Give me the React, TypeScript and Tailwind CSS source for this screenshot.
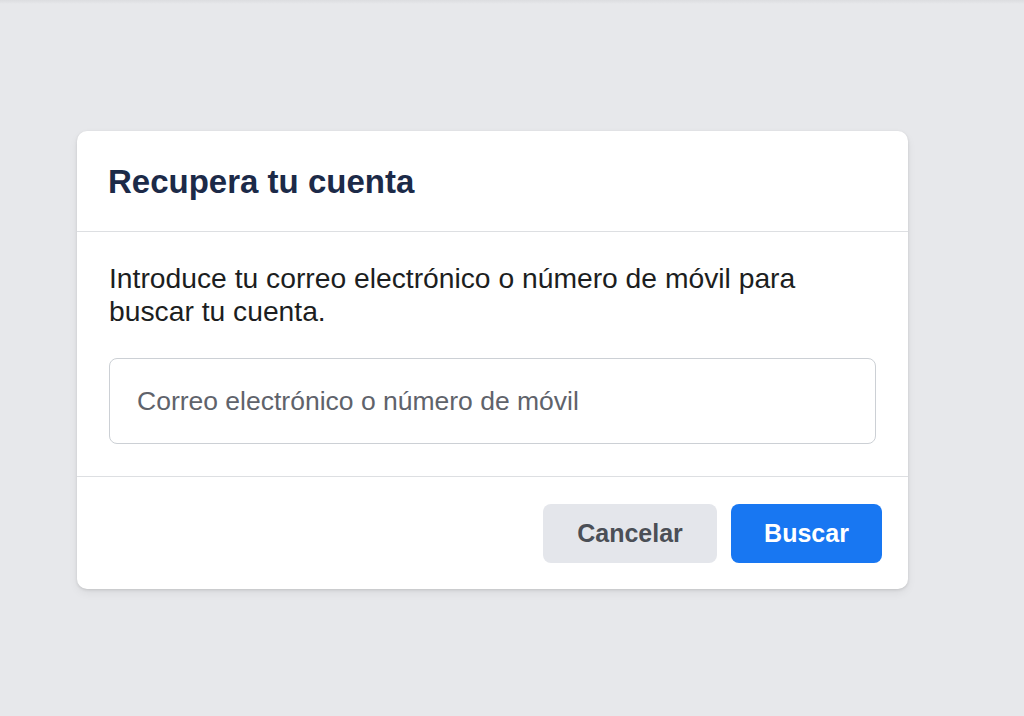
import { useState } from 'react';

const font = { fontFamily: '"Liberation Sans", Arial, Helvetica, sans-serif' };

const RecoverCard = () => {
	const [value, setValue] = useState('');

	return (
		<div className="w-[831px] rounded-[10px] bg-white shadow-[0_1px_3px_rgba(0,0,0,0.12),0_4px_10px_rgba(0,0,0,0.06)]">
			<div className="flex h-[101px] items-center border-b border-[#dddfe2] px-[31px]">
				<h2 className="text-[33px] font-bold leading-none text-[#1c2a48]">
					Recupera tu cuenta
				</h2>
			</div>

			<div className="border-b border-[#dddfe2] px-[32px] pb-[32px] pt-[30px]">
				<p className="text-[28.25px] leading-[33px] text-[#1c1e21]">
					Introduce tu correo electrónico o número de móvil para buscar tu cuenta.
				</p>
				<input
					type="text"
					value={value}
					onChange={(e) => setValue(e.target.value)}
					placeholder="Correo electrónico o número de móvil"
					className="mt-[30px] h-[86px] w-full rounded-[8px] border-[1.5px] border-[#ccd0d5] bg-white px-[27px] text-[26.5px] text-[#1c1e21] outline-none placeholder:text-[#5f636b]"
					style={font}
				/>
			</div>

			<div className="flex items-center justify-end gap-[14px] pb-[26px] pl-[32px] pr-[26px] pt-[27px]">
				<button className="h-[59px] w-[174px] rounded-[8px] bg-[#e4e6eb] text-[25px] font-bold text-[#4b4f56]" style={font}>
					Cancelar
				</button>
				<button className="h-[59px] w-[151px] rounded-[8px] bg-[#1877f2] text-[25px] font-bold text-white" style={font}>
					Buscar
				</button>
			</div>
		</div>
	);
};

const App = () => {
	return (
		<div className="relative min-h-[716px] w-full bg-[#e7e8eb]" style={font}>
			<div className="absolute inset-x-0 top-0 h-[4px] bg-gradient-to-b from-[#dcdde0] to-transparent" />
			<div className="flex pl-[77px] pt-[131px]">
				<RecoverCard />
			</div>
		</div>
	);
};

export default App;
